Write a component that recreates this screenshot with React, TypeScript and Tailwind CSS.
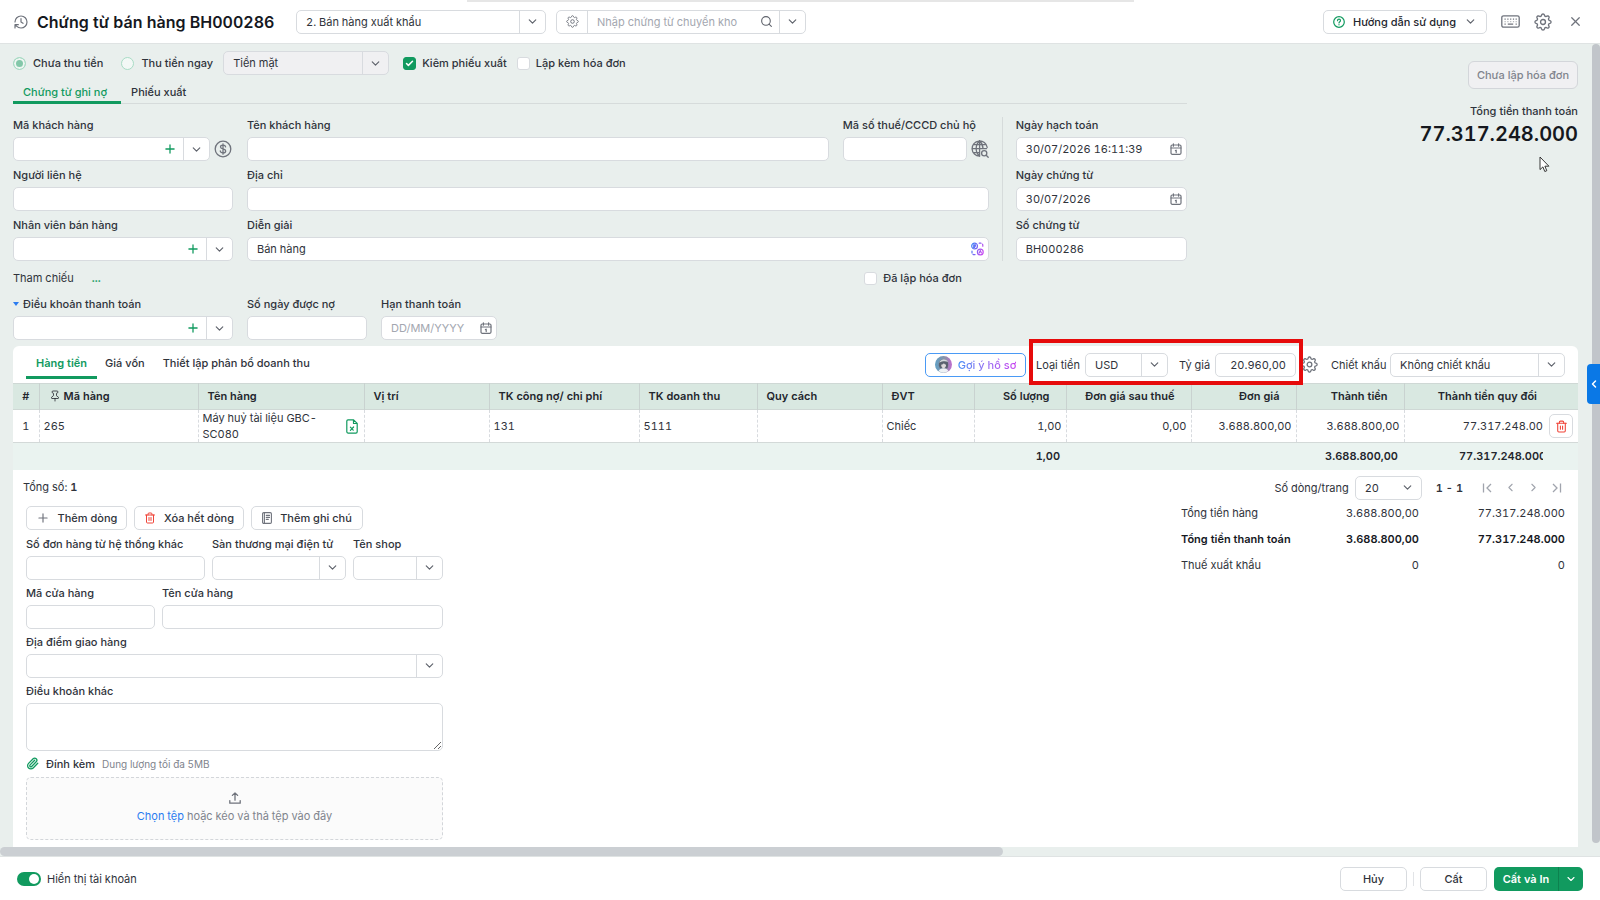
import { useId, useState } from "react";
import type { ReactNode } from "react";
import { ChevronDown, ChevronLeft, ChevronRight, Check, Paperclip, Pin, Plus, Search, Trash2, X } from "lucide-react";
import clsx from "clsx";

const box = "flex h-6 items-stretch overflow-hidden rounded-[5px] border border-[#d8dbdf] bg-white";
const bareInput = "min-w-0 flex-1 bg-transparent px-[9px] outline-none placeholder:text-[#a3a7b0]";

// outline of an eight-tooth cog, in a 24 box
const cogPath =
  Array.from({ length: 96 }, (_, i) => {
    const a = (i / 96) * Math.PI * 2;
    const w = Math.cos(8 * a);
    const r = 9.4 + 1.3 * Math.sign(w) * Math.sqrt(Math.abs(w));
    return `${i ? "L" : "M"}${(12 + r * Math.cos(a)).toFixed(2)} ${(12 + r * Math.sin(a)).toFixed(2)}`;
  }).join("") + "Z";

function Cog({ size = 18 }: { size?: number }) {
  return (
    <svg width={size} height={size} viewBox="0 0 24 24" fill="none" stroke="currentColor" strokeWidth="1.8" strokeLinejoin="round">
      <path d={cogPath} />
      <circle cx="12" cy="12" r="3.3" />
    </svg>
  );
}

function HistoryIcon() {
  return (
    <svg width="16" height="16" viewBox="0 0 24 24" fill="none" stroke="#6f737c" strokeWidth="1.8" strokeLinecap="round" strokeLinejoin="round">
      <path d="M3 12a9 9 0 1 1 9 9 9.75 9.75 0 0 1-6.74-2.74L3 16M3 21v-5h5" />
      <path d="M12 7v5l3 2" />
    </svg>
  );
}

function CalendarIcon() {
  return (
    <svg width="12" height="12" viewBox="0 0 12 12" fill="none" stroke="#6f737c" strokeWidth="1.2" strokeLinejoin="round" strokeLinecap="round">
      <rect x="1" y="2" width="10" height="9.3" rx="1.2" />
      <path d="M1 5h10M3.4 .8v2.4M8.6 .8v2.4M5.4 7.6l.8-.4v2.4" />
    </svg>
  );
}

function KeyboardIcon() {
  return (
    <svg width="19" height="13" viewBox="0 0 19 13" fill="none" stroke="#6f737c" strokeWidth="1.3">
      <rect x=".8" y=".8" width="17.4" height="11.4" rx="1.8" />
      <path d="M3.5 4.2h1.2M6.3 4.2h1.2M9.1 4.2h1.2M11.9 4.2h1.2M14.6 4.2h1.2M3.5 9.1h1.2M6.8 9.1h5.4M14.6 9.1h1.2" />
      <path d="M3.5 6.6h1.2M6.3 6.6h1.2M9.1 6.6h1.2M11.9 6.6h1.2M14.6 6.6h1.2" strokeOpacity=".5" />
    </svg>
  );
}

function GlobeSearchIcon() {
  return (
    <svg width="18" height="18" viewBox="0 0 18 18" fill="none" stroke="#6f737c" strokeWidth="1.3" strokeLinecap="round">
      <path d="M16.2 7.4A7.6 7.6 0 1 0 8.6 16.2M8.6 1v15.2M1 8.6h14.6M2.2 4.6h12.8M2.2 12.6h6.4M8.6 1c-4.6 4-4.6 11.2 0 15.2M8.6 1c2 1.7 3.2 4.2 3.4 7.2" />
      <circle cx="13.2" cy="13.2" r="2.6" />
      <path d="M15.2 15.2l2 2" />
    </svg>
  );
}

function DollarIcon() {
  return (
    <svg width="18" height="18" viewBox="0 0 18 18" fill="none" stroke="#6f737c" strokeWidth="1.3" strokeLinecap="round">
      <circle cx="9" cy="9" r="7.8" />
      <path d="M11.6 6.9c-.2-1.1-1.2-1.7-2.6-1.7s-2.5.7-2.5 1.8c0 2.6 5.2 1.3 5.2 4 0 1.1-1.1 1.9-2.7 1.9s-2.6-.8-2.7-1.9M9 3.8v10.4" />
    </svg>
  );
}

function AiIcon() {
  return (
    <svg width="13" height="14" viewBox="0 0 13 14" fill="none" strokeWidth="1.2" strokeLinecap="round">
      <defs>
        <linearGradient id="aiGrad" gradientUnits="userSpaceOnUse" x1="0" y1="4" x2="12" y2="8">
          <stop offset="0" stopColor="#3b82f6" />
          <stop offset="1" stopColor="#c44bf0" />
        </linearGradient>
      </defs>
      <g stroke="url(#aiGrad)">
        <circle cx="3.6" cy="4" r="2.9" />
        <circle cx="9.3" cy="10" r="2.9" />
        <path d="M2.6 2.9h2M2.6 4.2h2M2.6 5.4h1M8.2 11l1.1-2.4 1.1 2.4" />
        <path d="M8.2 1.2h1.6a2 2 0 0 1 2 2v1.6" strokeDasharray="2 1.5" />
        <path d="M1 9v1.6a2 2 0 0 0 2 2h1.6" strokeDasharray="2 1.5" />
      </g>
    </svg>
  );
}

function Avatar() {
  return (
    <svg width="17" height="17" viewBox="0 0 16 16">
      <defs>
        <linearGradient id="avatarGrad">
          <stop offset="0" stopColor="#5f9fc4" />
          <stop offset=".6" stopColor="#8d93a8" />
          <stop offset="1" stopColor="#c06bd0" />
        </linearGradient>
      </defs>
      <circle cx="8" cy="8" r="8" fill="url(#avatarGrad)" />
      <path d="M3.6 9C2.800 1.500 12.800 1 12.400 8.500l-.6 3H4.600z" fill="#59616e" />
      <path d="M4 6.400c1-4.200 6.800-4.600 8.200-.8-2.400-1-5.400-.8-8.200.8z" fill="#d5d9dd" />
      <path d="M5.800 8.200c1.200-.2 2-.7 2.600-1.400.5.800 1.100 1.200 2 1.400 0 2-1 3.200-2.300 3.200S5.800 10.200 5.800 8.200z" fill="#dcd8da" />
      <path d="M3.400 14.200c.8-2 2.600-2.700 4.600-2.700s3.800.7 4.600 2.700a8 8 0 0 1-9.200 0z" fill="#eef1f4" />
    </svg>
  );
}

function ExcelFileIcon() {
  return (
    <svg width="12" height="15" viewBox="0 0 12 15" fill="none" stroke="#119a5f" strokeWidth="1.2" strokeLinejoin="round" strokeLinecap="round">
      <path d="M2 .8h5.6l3.6 3.6v8.4a1.3 1.3 0 0 1-1.3 1.3H2A1.3 1.3 0 0 1 .8 12.8V2A1.3 1.3 0 0 1 2 .8zM7.5 1v3.5h3.5M4.4 8.2l2.8 3M7.6 8l-3.2 3.4" />
    </svg>
  );
}

function NoteIcon() {
  return (
    <svg width="10" height="12" viewBox="0 0 10 12" fill="none" stroke="#6f737c" strokeWidth="1.1" strokeLinecap="round">
      <rect x=".6" y=".6" width="8.8" height="10.8" rx="1.2" />
      <path d="M2.4 .8v10.4M4.3 3.4h3.2M4.3 5.4h3.2M4.3 7.4h2" />
    </svg>
  );
}

function UploadIcon() {
  return (
    <svg width="12" height="12" viewBox="0 0 12 12" fill="none" stroke="#6f737c" strokeWidth="1.3" strokeLinecap="round" strokeLinejoin="round">
      <path d="M.8 8.6v2.6h10.4V8.6M6 8.2V1M3.4 3.4L6 .9l2.6 2.5" />
    </svg>
  );
}

function Cursor() {
  return (
    <svg width="11" height="17" viewBox="0 0 11 17" className="pointer-events-none absolute top-[112px] right-[42px]">
      <path d="M1 1v12.6l2.9-2.7 1.9 4.6 2-.8-1.9-4.5h4z" fill="#fff" stroke="#222" strokeWidth=".9" strokeLinejoin="round" />
    </svg>
  );
}

function Chevron() {
  return <ChevronDown size={13} strokeWidth={2.2} className="text-[#5f636c]" />;
}

function SelectBox({ id, label, value, className, muted }: { id?: string; label?: string; value?: string; className?: string; muted?: boolean }) {
  return (
    <div className={clsx(box, className, muted && "bg-[#f0f0f2]!")}>
      <select id={id} aria-label={label} disabled={muted} className={clsx(bareInput, "appearance-none")}>
        <option>{value}</option>
      </select>
      <span className="pointer-events-none flex w-[26px] items-center justify-center border-l border-[#d8dbdf]">
        <Chevron />
      </span>
    </div>
  );
}

function ComboBox({ id }: { id?: string }) {
  return (
    <div className={clsx(box, "flex-1")}>
      <input id={id} type="text" className={bareInput} />
      <button aria-label="Thêm" className="flex w-[26px] items-center justify-center text-[#119a5f]">
        <Plus size={14} strokeWidth={2.2} />
      </button>
      <button aria-label="Chọn" className="flex w-[26px] items-center justify-center border-l border-[#d8dbdf]">
        <Chevron />
      </button>
    </div>
  );
}

type Kind = "text" | "combo" | "select" | "date" | "ai" | "area";

function Field({ label, kind = "text", value, placeholder, className, after, before }: {
  label: string;
  kind?: Kind;
  value?: string;
  placeholder?: string;
  className?: string;
  after?: ReactNode;
  before?: ReactNode;
}) {
  const id = useId();
  return (
    <div className={clsx("flex min-w-0 flex-col gap-1", className)}>
      <div className="flex h-4 items-center">
        {before}
        <label htmlFor={id} className="leading-4 font-medium whitespace-nowrap">{label}</label>
      </div>
      <div className="flex items-center gap-1">
        {kind === "combo" && <ComboBox id={id} />}
        {kind === "select" && <SelectBox id={id} className="flex-1" />}
        {kind === "area" && <textarea id={id} className="h-12 flex-1 rounded-[5px] border border-[#d8dbdf] px-[9px] outline-none" />}
        {(kind === "text" || kind === "date" || kind === "ai") && (
          <div className={clsx(box, "min-w-0 flex-1")}>
            <input id={id} type="text" defaultValue={value} placeholder={placeholder} className={bareInput} />
            {kind === "date" && <button aria-label="Chọn ngày" className="pr-1"><CalendarIcon /></button>}
            {kind === "ai" && <button aria-label="Gợi ý" className="pr-1"><AiIcon /></button>}
          </div>
        )}
        {after}
      </div>
    </div>
  );
}

function CheckField({ label, checked = false }: { label: string; checked?: boolean }) {
  const [on, setOn] = useState(checked);
  return (
    <label className="flex items-center gap-[6px] font-medium whitespace-nowrap">
      <span className="grid place-items-center">
        <input
          type="checkbox"
          checked={on}
          onChange={() => setOn(!on)}
          className="col-start-1 row-start-1 size-[13px] appearance-none rounded-[3px] border border-[#d8dbdf] bg-white checked:border-[#119a5f] checked:bg-[#119a5f]"
        />
        {on && <Check size={9} strokeWidth={4} className="pointer-events-none col-start-1 row-start-1 text-white" />}
      </span>
      {label}
    </label>
  );
}

function RadioField({ label, checked }: { label: string; checked?: boolean }) {
  return (
    <label className="flex items-center gap-[7px] font-medium whitespace-nowrap">
      <input
        type="radio"
        name="payment"
        defaultChecked={checked}
        className="size-[13px] appearance-none rounded-full border border-[#a8dcc5] bg-[#f3f8f6] checked:bg-[#83c7a9] checked:shadow-[inset_0_0_0_2px_#eef6f2]"
      />
      {label}
    </label>
  );
}

function OutlineButton({ children, className }: { children: ReactNode; className?: string }) {
  return (
    <button className={clsx("flex h-6 items-center justify-center rounded-[5px] border border-[#d8dbdf] bg-white font-medium whitespace-nowrap", className)}>
      {children}
    </button>
  );
}

function Header() {
  return (
    <header className="flex h-11 shrink-0 items-center border-b border-[#dfe3e3] bg-white pr-[17px] pl-[13px]">
      <HistoryIcon />
      <h1 className="ml-2 w-[243px] text-[16px] font-semibold whitespace-nowrap text-[#15181e]">Chứng từ bán hàng BH000286</h1>
      <SelectBox label="Loại chứng từ" value="2. Bán hàng xuất khẩu" className="ml-4 w-[250px]" />
      <div className={clsx(box, "ml-[10px] w-[250px]")}>
        <button aria-label="Thiết lập" className="flex w-[31px] items-center justify-center border-r border-[#d8dbdf] text-[#6f737c]">
          <Cog size={13} />
        </button>
        <input type="text" aria-label="Chứng từ chuyển kho" placeholder="Nhập chứng từ chuyển kho" className={bareInput} />
        <button aria-label="Tìm" className="flex w-[26px] items-center justify-center text-[#5f636c]">
          <Search size={13} />
        </button>
        <button aria-label="Chọn" className="flex w-[26px] items-center justify-center border-l border-[#d8dbdf]">
          <Chevron />
        </button>
      </div>
      <div className="ml-auto flex items-center gap-[14px] text-[#6f737c]">
        <OutlineButton className="w-[164px] gap-2 text-[#23262d]">
          <svg width="12" height="12" viewBox="0 0 12 12" fill="none" stroke="#119a5f" strokeWidth="1.2" strokeLinecap="round">
            <circle cx="6" cy="6" r="5.3" />
            <path d="M4.5 4.7c0-2 3-2 3 0 0 1-1.5 1.1-1.5 2.2M6 8.7v.1" />
          </svg>
          Hướng dẫn sử dụng
          <Chevron />
        </OutlineButton>
        <button aria-label="Phím tắt"><KeyboardIcon /></button>
        <button aria-label="Cài đặt"><Cog size={18} /></button>
        <button aria-label="Đóng" className="pl-[2px]"><X size={15} /></button>
      </div>
    </header>
  );
}

function VoucherForm() {
  return (
    <div className="w-3/4">
      <div className="flex h-6 items-center">
        <RadioField label="Chưa thu tiền" checked />
        <div className="ml-[18px]"><RadioField label="Thu tiền ngay" /></div>
        <SelectBox label="Hình thức" value="Tiền mặt" muted className="mr-[14px] ml-[10px] w-[166px]" />
        <CheckField label="Kiêm phiếu xuất" checked />
        <div className="ml-[10px]"><CheckField label="Lập kèm hóa đơn" /></div>
      </div>
      <nav className="flex h-[29px] border-b border-[#d6dbdb] font-medium">
        <button className="-mb-px border-b-[3px] border-[#119a5f] pt-2 pr-[14px] pl-[10px] text-[#119a5f]">Chứng từ ghi nợ</button>
        <button className="px-[10px] pt-[6px]">Phiếu xuất</button>
      </nav>
      <div className="mt-[13px] flex gap-[13px]">
        <div className="flex flex-1 flex-col gap-[6px]">
          <div className="flex gap-[14px]">
            <Field label="Mã khách hàng" kind="combo" className="w-[220px]" after={<button aria-label="Công nợ" className="pr-px"><DollarIcon /></button>} />
            <Field label="Tên khách hàng" className="flex-1" />
            <Field label="Mã số thuế/CCCD chủ hộ" className="w-[146px]" after={<button aria-label="Tra cứu"><GlobeSearchIcon /></button>} />
          </div>
          <div className="flex gap-[14px]">
            <Field label="Người liên hệ" className="w-[220px]" />
            <Field label="Địa chỉ" className="flex-1" />
          </div>
          <div className="flex gap-[14px]">
            <Field label="Nhân viên bán hàng" kind="combo" className="w-[220px]" />
            <Field label="Diễn giải" kind="ai" value="Bán hàng" className="flex-1" />
          </div>
        </div>
        <div className="flex w-[185px] flex-col gap-[6px] border-l border-[#d6dbdb] pl-[13px]">
          <Field label="Ngày hạch toán" kind="date" value="30/07/2026 16:11:39" />
          <Field label="Ngày chứng từ" kind="date" value="30/07/2026" />
          <Field label="Số chứng từ" value="BH000286" />
        </div>
      </div>
      <div className="mt-[9px] flex h-4 items-center">
        <span>Tham chiếu</span>
        <a href="#" className="ml-[18px] font-bold text-[#119a5f]">...</a>
        <div className="mr-[225px] ml-auto"><CheckField label="Đã lập hóa đơn" /></div>
      </div>
      <div className="mt-[10px] flex gap-[14px]">
        <Field
          label="Điều khoản thanh toán"
          kind="combo"
          className="w-[220px]"
          before={<svg width="10" height="4" viewBox="0 0 10 4"><path d="M0 0h6L3 4z" fill="#2b7cf0" /></svg>}
        />
        <Field label="Số ngày được nợ" className="w-[120px]" />
        <Field label="Hạn thanh toán" kind="date" placeholder="DD/MM/YYYY" className="w-[116px]" />
      </div>
    </div>
  );
}

const columns = [
  { name: "#", w: "w-[26px]" },
  { name: "Mã hàng", w: "w-[159px]" },
  { name: "Tên hàng", w: "w-[166px]" },
  { name: "Vị trí", w: "w-[125px]" },
  { name: "TK công nợ/ chi phí", w: "w-[150px]" },
  { name: "TK doanh thu", w: "w-[118px]" },
  { name: "Quy cách", w: "w-[125px]" },
  { name: "ĐVT", w: "w-[92px]" },
  { name: "Số lượng", w: "w-[92px]", num: true },
  { name: "Đơn giá sau thuế", w: "w-[125px]", num: true },
  { name: "Đơn giá", w: "w-[105px]", num: true },
  { name: "Thành tiền", w: "w-[108px]", num: true },
];

const cells = ["1", "265", "Máy huỷ tài liệu GBC-SC080", "", "131", "5111", "", "Chiếc", "1,00", "0,00", "3.688.800,00", "3.688.800,00"];
const sums = ["", "", "", "", "", "", "", "", "1,00", "", "", "3.688.800,00"];

function ItemTable() {
  return (
    <table className="w-full table-fixed border-t border-[#cfd8d5]">
      <thead>
        <tr className="h-[26px] border-b border-[#cfd8d5] bg-[#d9e8e1] text-[#23262d]">
          {columns.map((c, i) => (
            <th key={c.name} className={clsx(c.w, "border-r border-[#c9d2d0] pb-[2px] font-semibold whitespace-nowrap", i === 0 ? "text-center" : c.num ? "pr-4 text-right" : "pl-[9px] text-left")}>
              {c.name === "Mã hàng" ? (
                <span className="flex items-center gap-[3px]"><Pin size={12} strokeWidth={1.6} />{c.name}</span>
              ) : c.name}
            </th>
          ))}
          <th className="pr-[6px] pb-[2px] text-right font-semibold whitespace-nowrap">Thành tiền quy đổi</th>
          <th className="w-[35px]" aria-label="Thao tác" />
        </tr>
      </thead>
      <tbody>
        <tr className="h-[33px] border-b border-[#d3d9d8]">
          {cells.map((v, i) => (
            <td key={i} className={clsx("border-r border-dashed border-[#d8dbdf] leading-4", i === 0 ? "text-center" : columns[i].num ? "pr-1 text-right" : "pl-1")}>
              {i === 2 ? (
                <span className="flex items-center justify-between pr-[6px]">
                  <span className="w-[120px]">{v}</span>
                  <ExcelFileIcon />
                </span>
              ) : v}
            </td>
          ))}
          <td className="text-right">77.317.248.00</td>
          <td>
            <OutlineButton className="ml-[6px] w-6 text-[#f04438]"><Trash2 aria-label="Xóa" size={13} /></OutlineButton>
          </td>
        </tr>
      </tbody>
      <tfoot>
        <tr className="h-[27px] bg-[#eaf3f0] font-semibold text-[#23262d]">
          {sums.map((v, i) => (
            <td key={i} className="pr-[6px] text-right">{v}</td>
          ))}
          <td><span className="ml-auto block w-[84px] overflow-hidden whitespace-nowrap">77.317.248.000</span></td>
          <td />
        </tr>
      </tfoot>
    </table>
  );
}

function Toolbar() {
  return (
    <div className="flex h-[37px] items-center px-[13px]">
      <nav className="flex h-full items-start font-medium">
        <button className="h-[33px] border-b-[3px] border-[#119a5f] px-[10px] pt-[3px] font-semibold text-[#119a5f]">Hàng tiền</button>
        <button className="h-[33px] px-2">Giá vốn</button>
        <button className="h-[33px] px-[10px]">Thiết lập phân bổ doanh thu</button>
      </nav>
      <button className="ml-auto flex h-6 w-[101px] items-center justify-center gap-[6px] rounded-[5px] border border-[#4a9af5] font-medium whitespace-nowrap">
        <Avatar />
        <span className="bg-linear-to-r from-[#3b8cf5] to-[#c63df0] bg-clip-text text-transparent">Gợi ý hồ sơ</span>
      </button>
      <div className="relative ml-[10px] flex items-center">
        <div className="pointer-events-none absolute -inset-x-[7px] -top-[14px] -bottom-2 border-4 border-[#e60b0b]" />
        <label htmlFor="currency" className="w-[49px] whitespace-nowrap">Loại tiền</label>
        <SelectBox id="currency" value="USD" className="w-[83px]" />
        <label htmlFor="rate" className="ml-[11px] w-9 whitespace-nowrap">Tỷ giá</label>
        <div className={clsx(box, "w-[81px]")}>
          <input id="rate" type="text" defaultValue="20.960,00" className={clsx(bareInput, "text-right")} />
        </div>
      </div>
      <button aria-label="Thiết lập tỷ giá" className="ml-[5px] text-[#6f737c]"><Cog size={17} /></button>
      <label htmlFor="discount" className="ml-[13px] w-[59px] whitespace-nowrap">Chiết khấu</label>
      <SelectBox id="discount" value="Không chiết khấu" className="w-[175px]" />
    </div>
  );
}

function LineActions() {
  return (
    <div className="ml-[13px] flex w-[417px] flex-col gap-[5px]">
      <p className="-ml-[3px] flex h-[31px] items-center pt-1">Tổng số:&nbsp;<b className="font-semibold">1</b></p>
      <div className="mb-px flex gap-[7px]">
        <OutlineButton className="w-[101px] gap-2"><Plus size={14} className="text-[#6f737c]" />Thêm dòng</OutlineButton>
        <OutlineButton className="w-[110px] gap-2"><Trash2 size={12} className="text-[#f04438]" />Xóa hết dòng</OutlineButton>
        <OutlineButton className="w-28 gap-2"><NoteIcon />Thêm ghi chú</OutlineButton>
      </div>
      <div className="flex gap-[7px]">
        <Field label="Số đơn hàng từ hệ thống khác" className="flex-1" />
        <Field label="Sàn thương mại điện tử" kind="select" className="w-[134px]" />
        <Field label="Tên shop" kind="select" className="w-[90px]" />
      </div>
      <div className="flex gap-[7px]">
        <Field label="Mã cửa hàng" className="w-[129px]" />
        <Field label="Tên cửa hàng" className="flex-1" />
      </div>
      <Field label="Địa điểm giao hàng" kind="select" />
      <Field label="Điều khoản khác" kind="area" />
      <div className="flex h-4 items-center gap-[7px]">
        <Paperclip size={13} strokeWidth={2.4} className="text-[#119a5f]" />
        <span className="font-medium">Đính kèm</span>
        <span className="text-[10px] text-[#80848d]">Dung lượng tối đa 5MB</span>
      </div>
      <div className="flex h-[63px] flex-col items-center justify-center gap-1 rounded-[5px] border border-dashed border-[#d3d6da] bg-[#fbfbfb] text-[#80848d]">
        <UploadIcon />
        <p><a href="#" className="text-[#2b7cf0]">Chọn tệp</a> hoặc kéo và thả tệp vào đây</p>
      </div>
    </div>
  );
}

const totals = [
  { name: "Tổng tiền hàng", a: "3.688.800,00", b: "77.317.248.000" },
  { name: "Tổng tiền thanh toán", a: "3.688.800,00", b: "77.317.248.000", bold: true },
  { name: "Thuế xuất khẩu", a: "0", b: "0" },
];

function Totals() {
  return (
    <div className="mr-[13px] w-[384px] pt-[6px]">
      <div className="flex items-center justify-end gap-[10px] pr-[2px] text-[#a0a4ad]">
        <label htmlFor="pageSize" className="-mr-1 text-[#2f333b]">Số dòng/trang</label>
        <div className={clsx(box, "w-[67px] text-[#2f333b]")}>
          <select id="pageSize" className={clsx(bareInput, "appearance-none")}><option>20</option></select>
          <span className="pointer-events-none flex items-center pr-[7px]"><Chevron /></span>
        </div>
        <b className="mr-2 ml-1 font-semibold text-[#2f333b]">1 - 1</b>
        <button aria-label="Trang đầu">
          <svg width="13" height="12" viewBox="0 0 13 12" fill="none" stroke="currentColor" strokeWidth="1.3"><path d="M2.5 1.5v9M10 2L6 6l4 4" /></svg>
        </button>
        <button aria-label="Trang trước"><ChevronLeft size={13} /></button>
        <button aria-label="Trang sau"><ChevronRight size={13} /></button>
        <button aria-label="Trang cuối">
          <svg width="13" height="12" viewBox="0 0 13 12" fill="none" stroke="currentColor" strokeWidth="1.3"><path d="M10.5 1.5v9M3 2l4 4-4 4" /></svg>
        </button>
      </div>
      <table className="w-full">
        <tbody>
          {totals.map((r) => (
            <tr key={r.name} className={clsx("h-[26px]", r.bold && "font-semibold text-[#15181e]")}>
              <td>{r.name}</td>
              <td className="text-right">{r.a}</td>
              <td className="w-[146px] text-right">{r.b}</td>
            </tr>
          ))}
        </tbody>
      </table>
    </div>
  );
}

function Footer() {
  const [on, setOn] = useState(true);
  return (
    <footer className="flex h-11 shrink-0 items-center border-t border-[#dfe3e3] bg-white px-[17px]">
      <label className="flex items-center gap-[6px]">
        <input
          type="checkbox"
          role="switch"
          checked={on}
          onChange={() => setOn(!on)}
          className="h-[14px] w-6 appearance-none rounded-full bg-[#b8bcc4] p-[2px] before:block before:size-[10px] before:rounded-full before:bg-white checked:bg-[#119a5f] checked:before:ml-[10px]"
        />
        Hiển thị tài khoản
      </label>
      <OutlineButton className="ml-auto w-[67px]">Hủy</OutlineButton>
      <span className="mx-[6px] h-[14px] w-px bg-[#e2e4e7]" />
      <OutlineButton className="mr-[7px] w-[67px]">Cất</OutlineButton>
      <div className="flex h-6 overflow-hidden rounded-[5px] bg-[#119a5f] font-semibold text-white">
        <button className="w-[65px] border-r border-[#0d824f] whitespace-nowrap">Cất và In</button>
        <button aria-label="Thêm lựa chọn" className="flex w-6 items-center justify-center"><ChevronDown size={12} strokeWidth={2.2} /></button>
      </div>
    </footer>
  );
}

export default function App() {
  return (
    <div className="relative flex h-screen flex-col overflow-hidden bg-[#e9efed] font-['Inter',sans-serif] text-[11px] leading-4 text-[#2f333b] tabular-nums">
      <div className="absolute top-0 left-[467px] h-[2px] w-[667px] bg-[#e6e6e6]" />
      <Header />
      <main className="flex min-h-0 flex-1 flex-col">
        <div className="flex min-h-0 flex-1">
          <div className="relative min-w-0 flex-1 overflow-hidden pt-[7px] pr-[14px] pl-[13px]">
            <div className="flex items-start justify-between">
              <VoucherForm />
              <div className="flex flex-col items-end pt-[10px]">
                <button disabled className="h-7 w-[110px] rounded-[6px] border border-[#d3d6da] bg-[#f0f0f2] font-medium whitespace-nowrap text-[#80848d]">Chưa lập hóa đơn</button>
                <span className="mt-[14px] font-medium">Tổng tiền thanh toán</span>
                <span className="mt-px text-[20px] leading-7 font-semibold text-[#15181e]">77.317.248.000</span>
              </div>
            </div>
            <Cursor />
            <section className="mt-[6px] rounded-t-[6px] bg-white pb-2">
              <Toolbar />
              <ItemTable />
              <div className="flex items-start justify-between">
                <LineActions />
                <Totals />
              </div>
            </section>
          </div>
          <div className="w-2 pb-1"><div className="h-full rounded-full bg-[#c1c5ca]" /></div>
        </div>
        <div className="h-[9px]"><div className="h-full w-[1003px] rounded-full bg-[#cbcfd3]" /></div>
      </main>
      <button aria-label="Mở bảng bên" className="absolute top-[364px] right-0 flex h-10 w-[13px] items-center justify-center rounded-l-[4px] bg-[#0a78e6] text-white">
        <ChevronLeft size={12} strokeWidth={3} />
      </button>
      <Footer />
    </div>
  );
}
